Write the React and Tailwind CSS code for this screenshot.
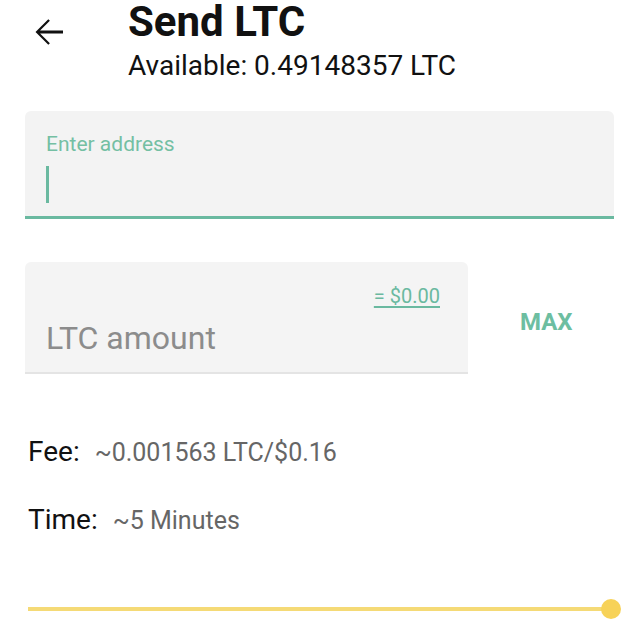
export default function App() {
  return (
    <div className="w-[640px] h-[640px] bg-white overflow-hidden font-['Roboto',sans-serif] text-[#111]">
      <div className="flex">
        <div className="w-[128px] pl-[28px] pt-[11px]">
          <svg width="42" height="42" viewBox="0 0 24 24" fill="#111">
            <path d="M20 11.2H6.9l5.6-5.6L11.6 4.7 4.3 12l7.3 7.3.9-.9-5.6-5.6H20z" />
          </svg>
        </div>
        <div className="pt-[1px]">
          <div className="text-[42px] leading-[42px] font-bold">Send LTC</div>
          <div className="mt-[9px] text-[28px] leading-[28px]">Available: 0.49148357 LTC</div>
        </div>
      </div>

      <div className="mt-[31px] ml-[25px] w-[589px] h-[108px] bg-[#f3f3f3] rounded-t-[6px] border-b-[3px] border-[#6ab9a0] pl-[21px] pt-[23px]">
        <div className="text-[21px] leading-[21px] text-[#74bfa3]">Enter address</div>
        <div className="mt-[11px] w-[3px] h-[37px] bg-[#6ab9a0]" />
      </div>

      <div className="mt-[43px] flex">
        <div className="ml-[25px] w-[443px] h-[112px] bg-[#f4f4f4] rounded-t-[6px] border-b-[2px] border-[#e4e4e4] pl-[21px] pr-[28px] pt-[24px]">
          <div className="flex justify-end">
            <span className="text-[20px] leading-[20px] text-[#6ab9a0] underline underline-offset-[3px]">= $0.00</span>
          </div>
          <div className="mt-[16px] text-[32px] leading-[32px] text-[#8c8c8c]">LTC amount</div>
        </div>
        <div className="ml-[52px] pt-[48px] text-[24px] leading-[24px] font-bold text-[#6dbea1]">MAX</div>
      </div>

      <div className="mt-[64px] ml-[28px] flex items-baseline">
        <span className="text-[28px] leading-[28px]">Fee:</span>
        <span className="ml-[15px] text-[25px] leading-[25px] text-[#666]">~0.001563 LTC/$0.16</span>
      </div>
      <div className="mt-[40px] ml-[28px] flex items-baseline">
        <span className="text-[28px] leading-[28px]">Time:</span>
        <span className="ml-[15px] text-[25px] leading-[25px] text-[#666]">~5 Minutes</span>
      </div>

      <div className="mt-[65px] ml-[28px] w-[593px] h-[20px] flex items-center">
        <div className="flex-1 h-[4px] bg-[#f5da76]" />
        <div className="-ml-[2px] w-[20px] h-[20px] rounded-full bg-[#f7d258]" />
      </div>
    </div>
  );
}
